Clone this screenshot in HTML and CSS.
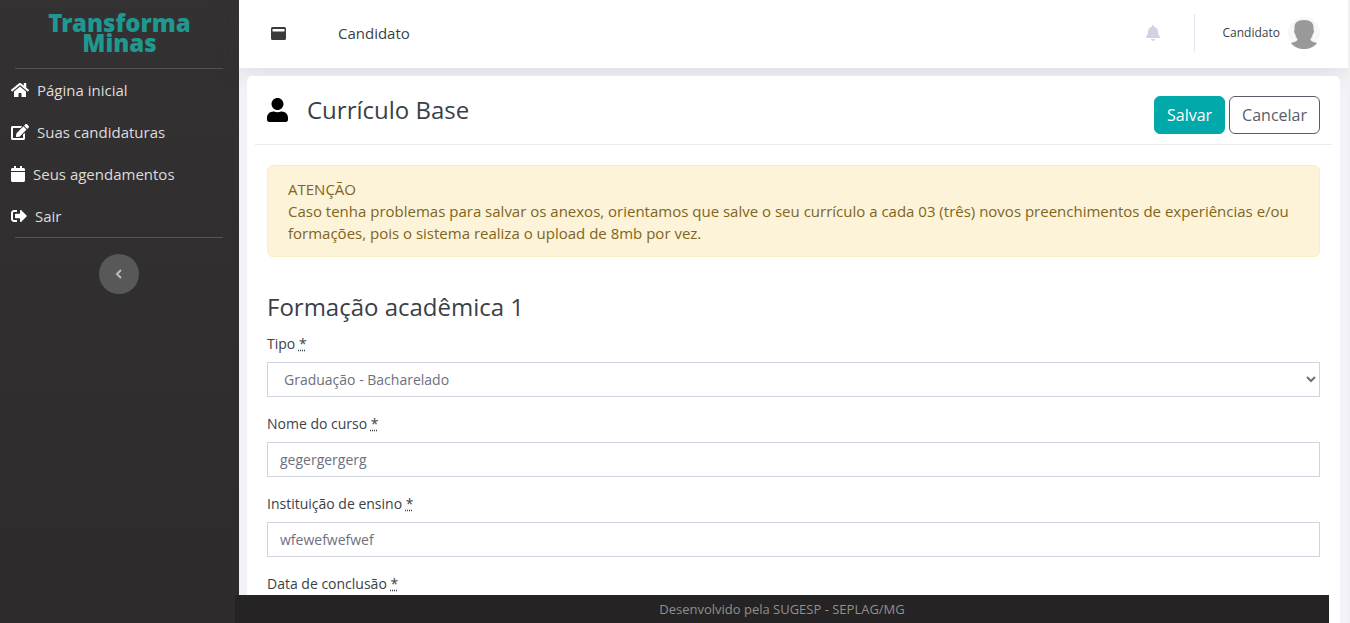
FILE: index.html
```html
<!DOCTYPE html>
<html lang="pt-BR">
<head>
<meta charset="utf-8">
<meta name="viewport" content="width=device-width, initial-scale=1">
<title>Transforma Minas - Currículo Base</title>
<link rel="stylesheet" href="styles.css">
</head>
<body>
<div class="layout">
  <aside class="sidebar">
    <a class="brand" href="#">Transforma<br>Minas</a>
    <nav class="menu">
      <a class="menu-link" href="#">
        <svg class="icon icon-wide" viewBox="0 0 576 512"><path d="M280.37 148.26L96 300.11V464a16 16 0 0 0 16 16l112.06-.29a16 16 0 0 0 15.92-16V368a16 16 0 0 1 16-16h64a16 16 0 0 1 16 16v95.64a16 16 0 0 0 16 16.05L464 480a16 16 0 0 0 16-16V300L295.67 148.26a12.19 12.19 0 0 0-15.3 0zM571.6 251.47L488 182.56V44.05a12 12 0 0 0-12-12h-56a12 12 0 0 0-12 12v72.61L318.47 43a48 48 0 0 0-61 0L4.34 251.47a12 12 0 0 0-1.6 16.9l25.5 31A12 12 0 0 0 45.15 301l235.22-193.74a12.19 12.19 0 0 1 15.3 0L530.9 301a12 12 0 0 0 16.9-1.6l25.5-31a12 12 0 0 0-1.7-16.93z"/></svg>
        <span>Página inicial</span>
      </a>
      <a class="menu-link" href="#">
        <svg class="icon icon-wide" viewBox="0 0 576 512"><path d="M402.6 83.2l90.2 90.2c3.8 3.8 3.8 10 0 13.8L274.4 405.6l-92.8 10.3c-12.4 1.4-22.9-9.1-21.5-21.5l10.3-92.8L388.8 83.2c3.8-3.8 10-3.8 13.8 0zm162-22.9l-48.8-48.8c-15.2-15.2-39.9-15.2-55.2 0l-35.4 35.4c-3.8 3.8-3.8 10 0 13.8l90.2 90.2c3.8 3.8 10 3.8 13.8 0l35.4-35.4c15.2-15.3 15.2-40 0-55.2zM384 346.2V448H64V128h229.8c3.2 0 6.2-1.3 8.5-3.5l40-40c7.6-7.6 2.2-20.5-8.5-20.5H48C21.5 64 0 85.5 0 112v352c0 26.500 21.500 48 48 48h352c26.500 0 48-21.500 48-48V306.200c0-10.700-12.900-16-20.500-8.500l-40 40c-2.200 2.300-3.500 5.300-3.500 8.500z"/></svg>
        <span>Suas candidaturas</span>
      </a>
      <a class="menu-link" href="#">
        <svg class="icon icon-narrow" viewBox="0 0 448 512"><path d="M12 192h424c6.600 0 12 5.400 12 12v260c0 26.500-21.500 48-48 48H48c-26.500 0-48-21.500-48-48V204c0-6.600 5.400-12 12-12zm436-44v-36c0-26.500-21.500-48-48-48h-48V12c0-6.600-5.400-12-12-12h-40c-6.600 0-12 5.400-12 12v52H160V12c0-6.600-5.400-12-12-12h-40c-6.600 0-12 5.400-12 12v52H48C21.500 64 0 85.500 0 112v36c0 6.600 5.400 12 12 12h424c6.600 0 12-5.400 12-12z"/></svg>
        <span>Seus agendamentos</span>
      </a>
      <a class="menu-link" href="#">
        <svg class="icon" viewBox="0 0 512 512"><path d="M497 273L329 441c-15 15-41 4.500-41-17v-96H152c-13.300 0-24-10.700-24-24v-96c0-13.300 10.700-24 24-24h136V88c0-21.400 25.900-32 41-17l168 168c9.300 9.400 9.300 24.600 0 34zM192 436v-40c0-6.600-5.400-12-12-12H96c-17.700 0-32-14.300-32-32V160c0-17.700 14.300-32 32-32h84c6.600 0 12-5.400 12-12V76c0-6.600-5.400-12-12-12H96c-53 0-96 43-96 96v192c0 53 43 96 96 96h84c6.600 0 12-5.400 12-12z"/></svg>
        <span>Sair</span>
      </a>
    </nav>
    <button class="collapse" type="button" aria-label="Recolher menu">
      <svg viewBox="0 0 8 10"><path d="M6 1L2 5l4 4"/></svg>
    </button>
  </aside>

  <div class="page">
    <header class="topbar">
      <button class="icon-button" type="button" aria-label="Menu">
        <svg viewBox="0 0 15 13"><path fill-rule="evenodd" d="M1.500 0h12A1.500 1.500 0 0 1 15 1.500v10a1.500 1.500 0 0 1-1.500 1.500h-12A1.500 1.500 0 0 1 0 11.500v-10A1.500 1.500 0 0 1 1.500 0zM1.500 2v2.500h12V2z"/></svg>
      </button>
      <span class="profile-name">Candidato</span>
      <div class="account">
        <button class="bell" type="button" aria-label="Notificações">
          <svg viewBox="0 0 448 512"><path d="M224 512c35.320 0 63.970-28.650 63.970-64H160.030c0 35.350 28.650 64 63.970 64zm215.390-149.710c-19.320-20.760-55.470-51.990-55.470-154.290 0-77.700-54.480-139.900-127.940-155.160V32c0-17.670-14.320-32-31.980-32s-31.980 14.330-31.980 32v20.840C118.560 68.100 64.080 130.300 64.080 208c0 102.300-36.150 133.530-55.470 154.290-6 6.450-8.660 14.160-8.610 21.710.110 16.400 12.980 32 32.100 32h383.800c19.120 0 32-15.600 32.100-32 .050-7.550-2.610-15.270-8.610-21.710z"/></svg>
        </button>
        <a class="user" href="#">
          <span>Candidato</span>
          <svg class="avatar" viewBox="0 0 32 32"><circle cx="16" cy="16" r="16" fill="#f7f7f7"/><path fill="#999" d="M16 3C9.500 3 6.500 6 6.500 10v3c-1 1-.5 3 .7 4 .6 3.500 2 4 2.300 5.500C9 25 5 25 3 26.200 6 30 11 32 16 32s10-2 13-5.800C27 25 23 25 22.500 22.500c.3-1.500 1.700-2 2.300-5.500 1.200-1 1.700-3 .7-4v-3C25.500 6 22.500 3 16 3z"/></svg>
        </a>
      </div>
    </header>

    <main class="content">
      <form class="card">
        <div class="card-head">
          <svg class="person" viewBox="0 0 448 512"><path d="M224 256c70.700 0 128-57.300 128-128S294.700 0 224 0 96 57.300 96 128s57.300 128 128 128zm89.600 32h-16.700c-22.200 10.200-46.900 16-72.900 16s-50.600-5.800-72.900-16h-16.700C60.200 288 0 348.200 0 422.400V464c0 26.500 21.500 48 48 48h352c26.500 0 48-21.500 48-48v-41.600c0-74.200-60.200-134.400-134.400-134.400z"/></svg>
          <h1>Currículo Base</h1>
          <div class="actions">
            <button class="btn btn-primary" type="submit">Salvar</button>
            <button class="btn btn-outline" type="button">Cancelar</button>
          </div>
        </div>
        <div class="card-body">
          <div class="alert" role="alert">ATENÇÃO<br>Caso tenha problemas para salvar os anexos, orientamos que salve o seu currículo a cada 03 (três) novos preenchimentos de experiências e/ou formações, pois o sistema realiza o upload de 8mb por vez.</div>
          <h2>Formação acadêmica 1</h2>
          <div class="field">
            <label for="tipo">Tipo <abbr title="Obrigatório">*</abbr></label>
            <select id="tipo" class="control"><option>Graduação - Bacharelado</option></select>
          </div>
          <div class="field">
            <label for="curso">Nome do curso <abbr title="Obrigatório">*</abbr></label>
            <input id="curso" class="control" type="text" value="gegergergerg">
          </div>
          <div class="field">
            <label for="instituicao">Instituição de ensino <abbr title="Obrigatório">*</abbr></label>
            <input id="instituicao" class="control" type="text" value="wfewefwefwef">
          </div>
          <div class="field">
            <label for="conclusao">Data de conclusão <abbr title="Obrigatório">*</abbr></label>
            <input id="conclusao" class="control" type="text">
          </div>
        </div>
      </form>
    </main>
  </div>
</div>
<footer class="footer">Desenvolvido pela SUGESP - SEPLAG/MG</footer>
</body>
</html>
```
FILE: styles.css
```css
* { box-sizing: border-box; }

body {
  margin: 0;
  background: #f2f3f8;
  color: #3a3f48;
  font-family: "Open Sans", "Noto Sans", sans-serif;
  font-size: 14px;
  line-height: 22px;
}

button, input, select { font: inherit; }
a { color: inherit; text-decoration: none; }
svg { display: block; fill: currentColor; }

.layout {
  display: flex;
  height: 100vh;
  overflow: hidden;
  border-right: 2px solid #f0f0f0;
}

.sidebar {
  flex: 0 0 239px;
  display: flex;
  flex-direction: column;
  background: linear-gradient(#343132, #2d2b2c);
}

.brand {
  height: 68px;
  padding-top: 13px;
  color: #1f9890;
  font-family: "Noto Sans", sans-serif;
  font-size: 24px;
  font-weight: 900;
  line-height: 20px;
  text-align: center;
}

.menu {
  margin: 0 16px 0 15px;
  border-top: 1px solid #555354;
  border-bottom: 1px solid #555354;
}

.menu-link {
  display: flex;
  align-items: center;
  gap: 8px;
  height: 42px;
  margin-left: -4px;
  color: #dddddd;
  font-size: 15px;
}

.icon { width: 16px; height: 16px; color: #fff; }
.icon-wide { width: 18px; }
.icon-narrow { width: 14px; }

.collapse {
  display: grid;
  place-items: center;
  align-self: center;
  width: 40px;
  height: 40px;
  margin: 16px 1px 0 0;
  padding: 0;
  border: 0;
  border-radius: 50%;
  background: #595859;
  color: #bdbcbd;
}

.collapse svg {
  width: 8px;
  height: 10px;
  fill: none;
  stroke: currentColor;
  stroke-width: 2;
}

.page { flex: 1; min-width: 0; }

.topbar {
  display: flex;
  align-items: center;
  height: 68px;
  padding: 0 28px 2px 32px;
  background: #fff;
  box-shadow: 0 2px 28px rgba(58, 59, 69, .15);
}

.icon-button, .bell { padding: 0; border: 0; background: none; }
.icon-button { color: #3a393b; }
.icon-button svg { width: 15px; height: 13px; }
.profile-name { margin-left: 52px; font-size: 15px; }

.account {
  display: flex;
  align-items: center;
  margin-left: auto;
}

.bell { margin-right: 34px; color: #d1d3e2; }
.bell svg { width: 14px; height: 16px; }

.user {
  display: flex;
  align-items: center;
  gap: 8px;
  height: 38px;
  padding-left: 28px;
  border-left: 1px solid #e3e6f0;
  font-size: 12px;
}

.avatar { width: 32px; height: 32px; }

.content { padding: 8px; }

.card {
  position: relative;
  padding: 0 8px 40px;
  border-radius: 5px;
  background: #fff;
}

.card-head {
  display: flex;
  align-items: flex-start;
  height: 69px;
  padding: 20px 12px 0;
  border-bottom: 1px solid #ebebed;
}

.person { width: 21px; height: 24px; margin-top: 2px; color: #000; }

h1, h2 {
  margin: 0;
  font-size: 24px;
  font-weight: 400;
}

h1 { margin-left: 19px; line-height: 28px; }
h2 { margin-bottom: 11px; line-height: 30px; }

.actions { display: flex; gap: 4px; margin-left: auto; }

.btn {
  height: 38px;
  padding: 0 12px;
  border: 1px solid #5a5c69;
  border-radius: 6px;
  background: #fff;
  color: #5a5c69;
  font-size: 16px;
}

.btn-primary { border-color: #02a9ab; background: #02a9ab; color: #fff; }

.card-body { padding: 20px 12px; }

.alert {
  margin-bottom: 35px;
  padding: 12px 20px;
  border: 1px solid #fcebc5;
  border-radius: 6px;
  background: #fdf3d8;
  color: #806520;
  font-size: 15px;
}

.field { margin-bottom: 16px; }
.field label { display: block; margin-bottom: 7px; }
abbr { text-decoration: underline dotted; }

.control {
  display: block;
  width: 100%;
  height: 35px;
  padding: 0 12px;
  border: 1px solid #d1d3e2;
  border-radius: 0;
  background: #fff;
  color: #6e707e;
}

.footer {
  position: fixed;
  right: 21px;
  bottom: 0;
  left: 235px;
  height: 28px;
  background: #252324;
  color: #909090;
  font-size: 13px;
  line-height: 28px;
  text-align: center;
}
```
